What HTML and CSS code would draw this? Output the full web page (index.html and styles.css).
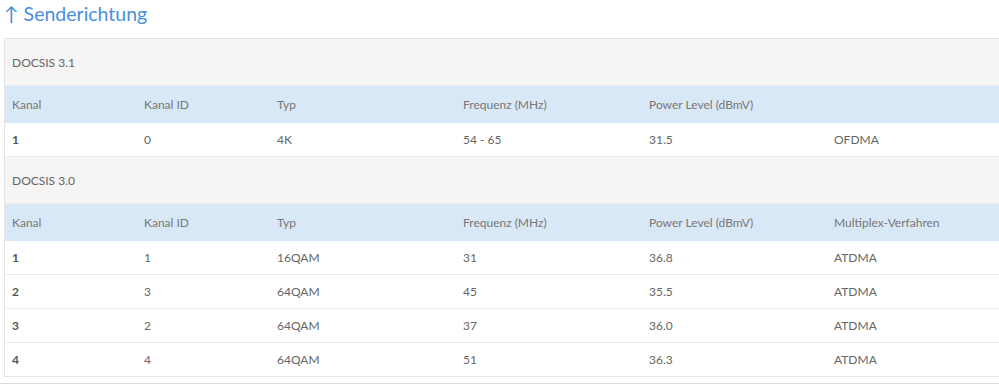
FILE: index.html
```html
<!DOCTYPE html>
<html>
<head>
<meta charset="utf-8">
<link rel="stylesheet" href="styles.css">
</head>
<body>
<h2 class="title">↑ Senderichtung</h2>
<div class="box">
<table class="tbl">
<colgroup>
<col class="c1"><col class="c2"><col class="c3"><col class="c4"><col class="c5"><col class="c6">
</colgroup>
<tr class="sec"><td colspan="6">DOCSIS 3.1</td></tr>
<tr class="head"><td>Kanal</td><td>Kanal ID</td><td>Typ</td><td>Frequenz (MHz)</td><td>Power Level (dBmV)</td><td></td></tr>
<tr class="row"><td class="num">1</td><td>0</td><td>4K</td><td>54 - 65</td><td>31.5</td><td>OFDMA</td></tr>
<tr class="sec"><td colspan="6">DOCSIS 3.0</td></tr>
<tr class="head"><td>Kanal</td><td>Kanal ID</td><td>Typ</td><td>Frequenz (MHz)</td><td>Power Level (dBmV)</td><td>Multiplex-Verfahren</td></tr>
<tr class="row"><td class="num">1</td><td>1</td><td>16QAM</td><td>31</td><td>36.8</td><td>ATDMA</td></tr>
<tr class="row"><td class="num">2</td><td>3</td><td>64QAM</td><td>45</td><td>35.5</td><td>ATDMA</td></tr>
<tr class="row"><td class="num">3</td><td>2</td><td>64QAM</td><td>37</td><td>36.0</td><td>ATDMA</td></tr>
<tr class="row last"><td class="num">4</td><td>4</td><td>64QAM</td><td>51</td><td>36.3</td><td>ATDMA</td></tr>
</table>
</div>
<div class="rule"></div>
</body>
</html>
```
FILE: styles.css
```css
html, body {
  margin: 0;
  padding: 0;
  background: #fff;
  overflow: hidden;
}
body {
  font-family: "Lato", "Noto Sans", sans-serif;
  color: #666;
  width: 999px;
}
.title {
  margin: 0;
  padding: 3px 0 0 4px;
  height: 35px;
  box-sizing: border-box;
  font-size: 19.5px;
  font-weight: 400;
  color: #4a8fdc;
  line-height: 22px;
}
.box {
  margin-left: 4px;
  width: 1010px;
  border: 1px solid #e3e3e3;
  border-right: none;
  margin-top: 3px;
}
.tbl {
  border-collapse: collapse;
  width: 100%;
  table-layout: fixed;
  font-size: 12px;
}
.c1 { width: 132px; }
.c2 { width: 133px; }
.c3 { width: 186px; }
.c4 { width: 186px; }
.c5 { width: 185px; }
.tbl td {
  padding: 0 0 0 7px;
  white-space: nowrap;
}
.sec td {
  background: #f6f5f3;
  height: 46px;
  color: #666;
  border-bottom: 1px solid #ebeff2;
}
.head td {
  background: #d9e8f6;
  height: 37px;
  color: #777;
}
.row td {
  height: 33px;
  background: #fff;
  border-bottom: 1px solid #ebebeb;
  color: #666;
}
.row.last td {
  border-bottom: none;
}
.row td.num {
  color: #555;
  font-weight: 700;
}
.rule {
  margin-top: 6px;
  height: 1px;
  background: #dcdcdc;
}
```
